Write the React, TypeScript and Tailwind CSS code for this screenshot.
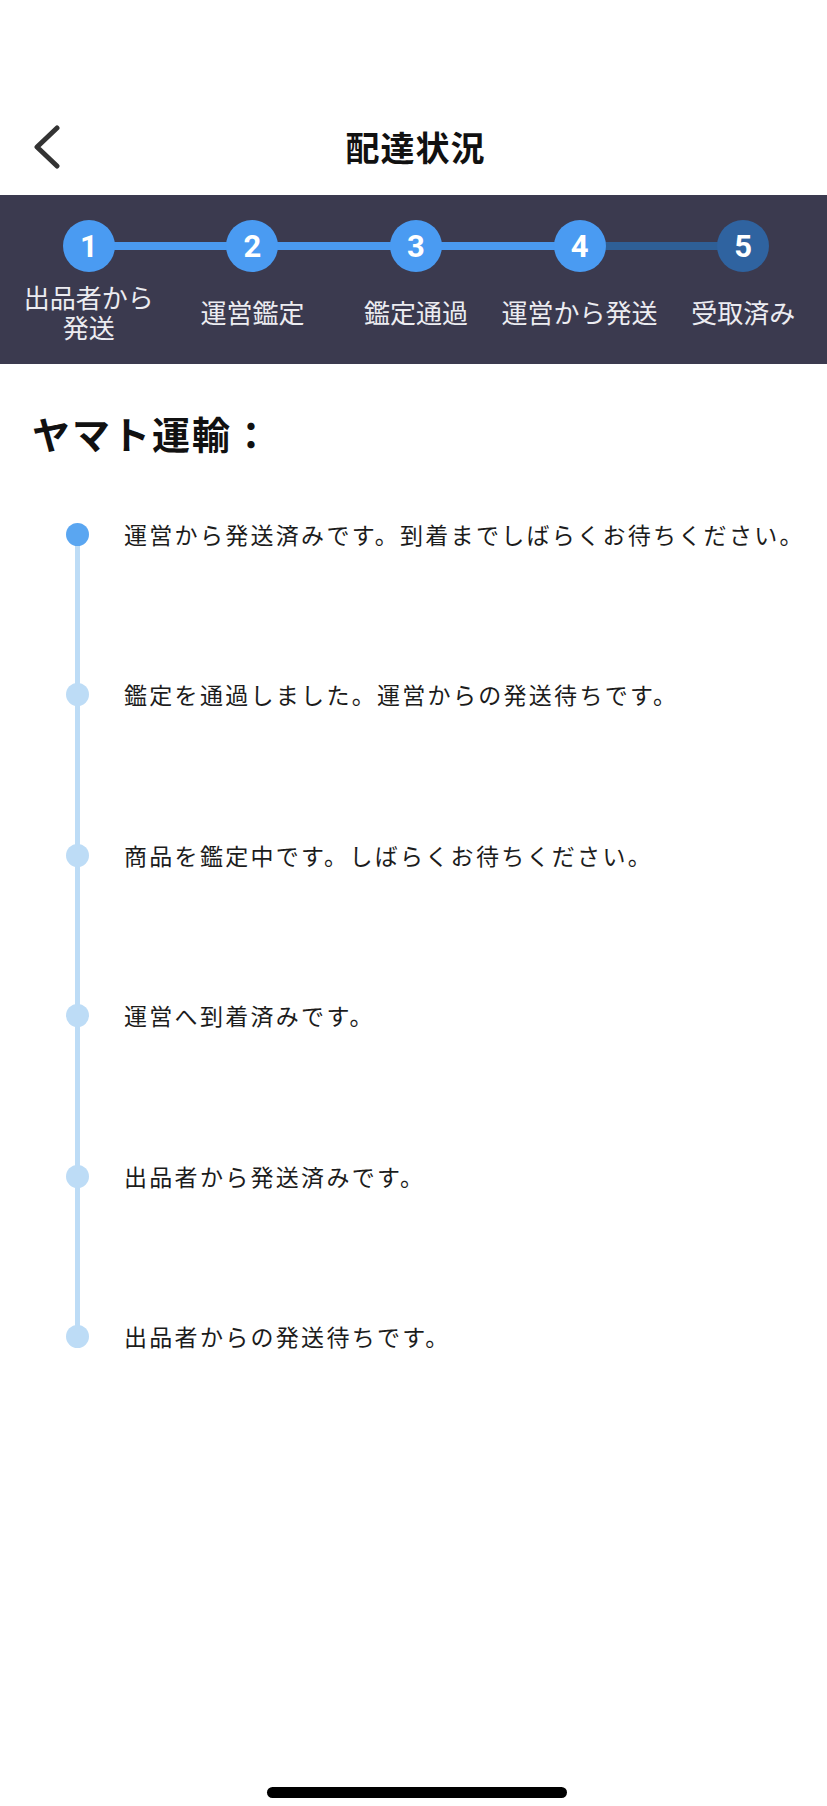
import React from "react";

const steps = [
  { n: "1", label: "出品者から\n発送", done: true },
  { n: "2", label: "運営鑑定", done: true },
  { n: "3", label: "鑑定通過", done: true },
  { n: "4", label: "運営から発送", done: true },
  { n: "5", label: "受取済み", done: false },
];

const events = [
  { text: "運営から発送済みです。到着までしばらくお待ちください。", active: true },
  { text: "鑑定を通過しました。運営からの発送待ちです。", active: false },
  { text: "商品を鑑定中です。しばらくお待ちください。", active: false },
  { text: "運営へ到着済みです。", active: false },
  { text: "出品者から発送済みです。", active: false },
  { text: "出品者からの発送待ちです。", active: false },
];

const jp = { fontFamily: '"Noto Sans CJK JP", "Noto Sans", sans-serif' };

export default function App() {
  return (
    <div className="min-h-[1806px] w-[827px] bg-white flex flex-col" style={jp}>
      {/* Header */}
      <div className="pt-[98px]">
        <div className="h-[97px] grid grid-cols-[1fr_auto_1fr] items-center">
          <div className="pl-[32px] flex items-center">
            <svg width="30" height="44" viewBox="0 0 30 44" fill="none">
              <path d="M25 3 L5 22 L25 41" stroke="#333333" strokeWidth="5" strokeLinecap="round" strokeLinejoin="round" />
            </svg>
          </div>
          <div className="text-[34px] font-bold text-[#111] leading-none tracking-[1px] pl-[4px]">配達状況</div>
          <div />
        </div>
      </div>

      {/* Stepper */}
      <div className="h-[169px] bg-[#3b3a4f] pl-[7px] pr-[2px] pt-[25px] flex">
        {steps.map((s, i) => (
          <div key={s.n} className="flex-1 flex flex-col items-center relative">
            {i < steps.length - 1 && (
              <div
                className={
                  "absolute left-1/2 w-full top-[22px] h-[8px] " +
                  (i === steps.length - 2 ? "bg-[#2e5f96]" : "bg-[#4a9af0]")
                }
              />
            )}
            <div
              className={
                "relative w-[52px] h-[52px] rounded-full flex items-center justify-center " +
                (s.done ? "bg-[#4a9bf2]" : "bg-[#2f63a0]")
              }
            >
              <span className="text-white font-bold text-[31px] leading-none" style={{ fontFamily: "Roboto, sans-serif" }}>
                {s.n}
              </span>
            </div>
            <div className="h-[80px] w-full flex items-center justify-center">
              <div className="text-[26px] leading-[30px] text-[#ececf1] text-center whitespace-pre">{s.label}</div>
            </div>
          </div>
        ))}
      </div>

      {/* Carrier */}
      <div className="pl-[32px] mt-[47px] text-[38px] leading-[44px] font-bold text-[#111] tracking-[2px]">ヤマト運輸：</div>

      {/* Timeline */}
      <div className="relative mt-[59px]">
        <div className="absolute left-[75px] top-[20px] bottom-[20px] w-[5px] bg-[#bddcf6]" />
        {events.map((e, i) => (
          <div key={i} className={i < events.length - 1 ? "h-[160.5px]" : "h-[40px]"}>
            <div className="h-[40px] flex items-center pl-[66px]">
              <div
                className={
                  "relative w-[23px] h-[23px] rounded-full shrink-0 " + (e.active ? "bg-[#5aa6f1]" : "bg-[#bddcf6]")
                }
              />
              <div className="ml-[35px] text-[23px] tracking-[2.3px] text-[#1c1c1c] whitespace-nowrap leading-none">
                {e.text}
              </div>
            </div>
          </div>
        ))}
      </div>

      {/* Home indicator */}
      <div className="mt-auto pb-[8px] flex justify-center pl-[7px]">
        <div className="w-[300px] h-[11px] rounded-full bg-black" />
      </div>
    </div>
  );
}
